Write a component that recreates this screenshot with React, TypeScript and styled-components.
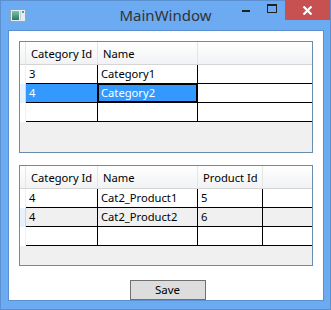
import React from "react";
import styled, { createGlobalStyle, css } from "styled-components";

const GlobalStyle = createGlobalStyle`
  html, body {
    margin: 0;
    padding: 0;
    background: #ffffff;
  }
  * {
    box-sizing: border-box;
  }
`;

const Frame = styled.div`
  width: 331px;
  height: 310px;
  background: #6caaf1;
  border: 1px solid #5a8fd0;
  display: flex;
  flex-direction: column;
  font-family: "Noto Sans", "Open Sans", sans-serif;
`;

const TitleBar = styled.div`
  height: 29px;
  display: flex;
  align-items: flex-start;
  position: relative;
`;

const AppIcon = styled.svg`
  margin: 8px 0 0 9px;
`;

const Title = styled.div`
  position: absolute;
  left: 0;
  right: 0;
  top: 4px;
  text-align: center;
  font-size: 15px;
  color: #333333;
  pointer-events: none;
`;

const Caption = styled.div`
  margin-left: auto;
  display: flex;
  align-items: flex-start;
`;

const CaptionButton = styled.div<{ $close?: boolean }>`
  width: ${(p) => (p.$close ? 45 : 26)}px;
  height: 20px;
  display: flex;
  align-items: center;
  justify-content: center;
  margin-top: -1px;
  ${(p) =>
    p.$close &&
    css`
      background: #c75050;
    `}
`;

const Client = styled.div`
  flex: 1;
  margin: 0 6px 8px 7px;
  background: #ffffff;
  border: 1px solid #5b8fcf;
  display: flex;
  flex-direction: column;
  padding: 10px 10px 0 10px;
`;

const Grid = styled.div<{ $height: number }>`
  height: ${(p) => p.$height}px;
  border: 1px solid #688caf;
  background: #f0f0f0;
  font-size: 11.2px;
  color: #000000;
`;

const Rows = styled.div<{ $cols: string }>`
  display: grid;
  grid-template-columns: ${(p) => p.$cols};
  background: #ffffff;
`;

const HeaderCell = styled.div<{ $last?: boolean }>`
  height: 23px;
  padding-left: 5px;
  line-height: 23px;
  background: linear-gradient(#ffffff, #f1f2f4);
  border-bottom: 1px solid #d5d5d5;
  border-right: ${(p) => (p.$last ? "none" : "1px solid #e5e5e5")};
  white-space: nowrap;
  overflow: hidden;
`;

const RowHeader = styled.div<{ $current?: boolean }>`
  height: 19px;
  background: ${(p) => (p.$current ? "#e8f2fc" : "#ffffff")};
  border-right: 1px solid ${(p) => (p.$current ? "#bcdcf4" : "#f0f0f0")};
`;

const Cell = styled.div<{
  $selected?: boolean;
  $focused?: boolean;
  $alt?: boolean;
  $filler?: boolean;
}>`
  height: 19px;
  padding-left: 3px;
  line-height: 18px;
  white-space: nowrap;
  overflow: hidden;
  border-bottom: 1px solid #000000;
  border-right: ${(p) => (p.$filler ? "none" : "1px solid #000000")};
  background: ${(p) =>
    p.$selected ? "#3399ff" : p.$alt ? "#f0f0f0" : "#ffffff"};
  color: ${(p) => (p.$selected ? "#ffffff" : "#000000")};
  ${(p) =>
    p.$focused &&
    css`
      box-shadow: inset 0 0 0 1px #000000;
    `}
`;

const Spacer = styled.div<{ $h: number }>`
  height: ${(p) => p.$h}px;
  flex-shrink: 0;
`;

const ButtonRow = styled.div`
  display: flex;
  justify-content: center;
  padding-left: 3px;
`;

const SaveButton = styled.button`
  width: 76px;
  height: 20px;
  background: #dddddd;
  border: 1px solid #707070;
  font-family: "Noto Sans", "Open Sans", sans-serif;
  font-size: 11.5px;
  color: #000000;
  padding: 0;
  line-height: 18px;
`;

type Row = { cells: string[]; selected?: boolean; alt?: boolean; current?: boolean; focus?: number };

function DataGrid({
  columns,
  widths,
  rows,
  height,
}: {
  columns: string[];
  widths: number[];
  rows: Row[];
  height: number;
}) {
  const template = ["6px", ...widths.map((w) => `${w}px`), "1fr"].join(" ");
  return (
    <Grid $height={height}>
      <Rows $cols={template}>
        <HeaderCell />
        {columns.map((c) => (
          <HeaderCell key={c}>{c}</HeaderCell>
        ))}
        <HeaderCell $last />
        {rows.map((r, i) => (
          <React.Fragment key={i}>
            <RowHeader $current={r.current} />
            {columns.map((_, j) => (
              <Cell
                key={j}
                $selected={r.selected}
                $alt={r.alt}
                $focused={r.focus === j}
              >
                {r.cells[j]}
              </Cell>
            ))}
            <Cell $filler $alt={r.alt} />
          </React.Fragment>
        ))}
      </Rows>
    </Grid>
  );
}

export default function App() {
  return (
    <>
      <GlobalStyle />
      <Frame>
        <TitleBar>
          <AppIcon width="16" height="13" viewBox="0 0 16 13">
            <defs>
              <linearGradient id="ic" x1="0" y1="0" x2="0" y2="1">
                <stop offset="0" stopColor="#7fc2b0" />
                <stop offset="1" stopColor="#1f7a6a" />
              </linearGradient>
            </defs>
            <rect x="0.5" y="0.5" width="15" height="12" fill="#e9ecef" stroke="#9aa4ae" />
            <rect x="2" y="2" width="7" height="9" fill="url(#ic)" />
            <rect x="10" y="2" width="1" height="9" fill="#c4ccd4" />
            <rect x="12" y="2" width="2" height="2" fill="#4aa095" />
          </AppIcon>
          <Title>MainWindow</Title>
          <Caption>
            <CaptionButton>
              <svg width="8" height="3" viewBox="0 0 8 3">
                <rect x="0" y="1" width="8" height="2" fill="#222222" />
              </svg>
            </CaptionButton>
            <CaptionButton>
              <svg width="10" height="9" viewBox="0 0 10 9" style={{ marginBottom: 3 }}>
                <rect x="0.5" y="0.5" width="9" height="8" fill="none" stroke="#222222" />
                <rect x="0" y="0" width="10" height="2" fill="#222222" />
              </svg>
            </CaptionButton>
            <CaptionButton $close>
              <svg width="11" height="9" viewBox="0 0 11 9">
                <path d="M1.5 0.5 L9.5 8.5 M9.5 0.5 L1.5 8.5" stroke="#ffffff" strokeWidth="2.2" />
              </svg>
            </CaptionButton>
          </Caption>
        </TitleBar>
        <Client>
          <DataGrid
            height={112}
            columns={["Category Id", "Name"]}
            widths={[72, 100]}
            rows={[
              { cells: ["3", "Category1"] },
              { cells: ["4", "Category2"], selected: true, current: true, focus: 1 },
              { cells: ["", ""] },
            ]}
          />
          <Spacer $h={12} />
          <DataGrid
            height={101}
            columns={["Category Id", "Name", "Product Id"]}
            widths={[72, 100, 65]}
            rows={[
              { cells: ["4", "Cat2_Product1", "5"] },
              { cells: ["4", "Cat2_Product2", "6"], alt: true, current: true },
              { cells: ["", "", ""] },
            ]}
          />
          <Spacer $h={14} />
          <ButtonRow>
            <SaveButton>Save</SaveButton>
          </ButtonRow>
        </Client>
      </Frame>
    </>
  );
}
